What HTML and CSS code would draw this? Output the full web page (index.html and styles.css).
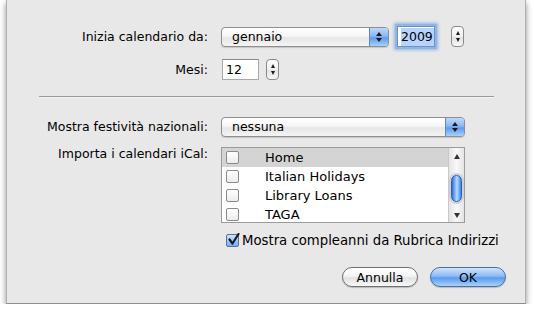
FILE: index.html
```html
<!DOCTYPE html>
<html lang="it">
<head>
    <meta charset="UTF-8">
    <title>Preferenze calendario</title>
    <link rel="stylesheet" href="styles.css">
</head>
<body>
    <div class="sheet">
        <div class="form form-top">
            <label class="lbl">Inizia calendario da:</label>
            <div class="ctrls">
                <div class="popup popup-month">
                    <span class="popup-text">gennaio</span>
                    <span class="popup-arrows"><i class="up"></i><i class="down"></i></span>
                </div>
                <div class="field field-year focus"><span class="sel">2009</span></div>
                <div class="stepper"><i class="up"></i><i class="down"></i></div>
            </div>

            <label class="lbl">Mesi:</label>
            <div class="ctrls">
                <div class="field field-months">12</div>
                <div class="stepper"><i class="up"></i><i class="down"></i></div>
            </div>
        </div>

        <div class="sep"></div>

        <div class="form form-bottom">
            <label class="lbl">Mostra festività nazionali:</label>
            <div class="ctrls">
                <div class="popup popup-wide">
                    <span class="popup-text">nessuna</span>
                    <span class="popup-arrows"><i class="up"></i><i class="down"></i></span>
                </div>
            </div>

            <label class="lbl lbl-top">Importa i calendari iCal:</label>
            <div class="list">
                <div class="rows">
                    <div class="item selected"><span class="cb"></span>Home</div>
                    <div class="item"><span class="cb"></span>Italian Holidays</div>
                    <div class="item"><span class="cb"></span>Library Loans</div>
                    <div class="item"><span class="cb"></span>TAGA</div>
                </div>
                <div class="scroll">
                    <i class="sup"></i>
                    <div class="track"><div class="thumb"></div></div>
                    <i class="sdown"></i>
                </div>
            </div>

            <span></span>
            <div class="check-row"><span class="cb checked"><svg width="13" height="13" viewBox="0 0 13 13"><path d="M2.5 6.5 L5.5 10.5 L11.5 1" fill="none" stroke="#1a1a2a" stroke-width="2.2" stroke-linecap="round" stroke-linejoin="round"/></svg></span>Mostra compleanni da Rubrica Indirizzi</div>
        </div>

        <div class="buttons">
            <button class="btn">Annulla</button>
            <button class="btn btn-default">OK</button>
        </div>
    </div>
</body>
</html>
```

FILE: styles.css
```css
body {
    margin: 0;
    background: #ffffff;
    font-family: "DejaVu Sans", sans-serif;
    font-size: 12.5px;
    color: #000;
}

.sheet {
    margin-left: 6px;
    width: 520px;
    height: 304px;
    background: #e8e8e8;
    border-left: 1px solid #b0b0b0;
    border-right: 1px solid #b0b0b0;
    border-bottom: 1px solid #8c8c8c;
    box-sizing: border-box;
    box-shadow: 0 3px 6px rgba(0, 0, 0, 0.45);
    position: relative;
}

.form {
    display: grid;
    grid-template-columns: 201px 1fr;
    column-gap: 13px;
    align-items: center;
}

.form-top {
    padding-top: 26px;
    row-gap: 12px;
}

.lbl {
    text-align: right;
    white-space: nowrap;
}

.lbl-top {
    align-self: start;
    margin-top: -1px;
}

.ctrls {
    display: flex;
    align-items: center;
    height: 21px;
}

/* pop-up buttons */
.popup {
    height: 18px;
    border: 1px solid #8e8e8e;
    border-radius: 4px;
    background: linear-gradient(#ffffff 0%, #f6f6f6 45%, #e6e6e6 55%, #f4f4f4 100%);
    display: flex;
    align-items: center;
    overflow: hidden;
    box-shadow: 0 1px 1px rgba(0, 0, 0, 0.15);
}

.popup-month {
    width: 166px;
}

.popup-wide {
    width: 242px;
}

.popup-text {
    flex: 1;
    padding-left: 10px;
    line-height: 18px;
}

.popup-arrows {
    width: 18px;
    height: 18px;
    border-left: 1px solid #5d88c4;
    background: linear-gradient(#bcd8fb 0%, #8ab8f3 45%, #5d9bee 55%, #a8d0fb 100%);
    display: flex;
    flex-direction: column;
    align-items: center;
    justify-content: center;
    gap: 2px;
}

.up, .down, .sup, .sdown {
    display: block;
    width: 0;
    height: 0;
    border-left: 3px solid transparent;
    border-right: 3px solid transparent;
}

.up, .sup {
    border-bottom: 4px solid #1b1b1b;
}

.down, .sdown {
    border-top: 4px solid #1b1b1b;
}

/* text fields */
.field {
    height: 19px;
    background: #fff;
    border: 1px solid #a8a8a8;
    border-top-color: #8a8a8a;
    line-height: 19px;
    padding-left: 3px;
    box-sizing: content-box;
}

.field-year {
    width: 33px;
    margin-left: 8px;
}

.focus {
    border-color: #6f92c6;
    box-shadow: 0 0 0 2px #8fb4e8, 0 0 3px 3px rgba(96, 148, 220, 0.6);
}

.sel {
    background: #b6d4fe;
    padding: 1px 1px 2px 0;
}

.field-months {
    width: 32px;
    margin-left: 1px;
}

.stepper {
    width: 11px;
    height: 19px;
    border: 1px solid #8a8a8a;
    border-radius: 4px;
    background: linear-gradient(#ffffff 0%, #f0f0f0 50%, #e0e0e0 51%, #f8f8f8 100%);
    display: flex;
    flex-direction: column;
    align-items: center;
    justify-content: center;
    gap: 3px;
    margin-left: 16px;
}

.field-months + .stepper {
    margin-left: 7px;
}

.stepper .up {
    border-left-width: 2px;
    border-right-width: 2px;
    border-bottom-width: 4px;
}

.stepper .down {
    border-left-width: 2px;
    border-right-width: 2px;
    border-top-width: 4px;
}

.sep {
    height: 1px;
    background: #9a9a9a;
    margin: 16px 31px 0 32px;
    border-bottom: 1px solid #f4f4f4;
}

.form-bottom {
    padding-top: 18px;
    row-gap: 10px;
}

/* calendar list */
.list {
    width: 242px;
    height: 74px;
    border: 1px solid #9b9b9b;
    background: #fff;
    display: flex;
}

.rows {
    flex: 1;
    font-size: 13px;
}

.item {
    height: 19px;
    line-height: 19px;
    display: flex;
    align-items: center;
}

.item.selected {
    background: #d4d4d4;
}

.cb {
    width: 11px;
    height: 11px;
    border: 1px solid #8a8a8a;
    border-radius: 2px;
    background: linear-gradient(#ffffff, #ececec);
    margin-left: 4px;
    margin-right: 26px;
    flex-shrink: 0;
}

.scroll {
    width: 15px;
    border-left: 1px solid #c8c8c8;
    background: linear-gradient(90deg, #e4e4e4, #f8f8f8 50%, #e4e4e4);
    display: flex;
    flex-direction: column;
    align-items: center;
}

.sup {
    margin-top: 6px;
    border-bottom: 5px solid #333;
}

.sdown {
    margin-bottom: 4px;
    border-top: 5px solid #333;
}

.track {
    flex: 1;
    display: flex;
    align-items: center;
    justify-content: center;
}

.thumb {
    width: 11px;
    height: 27px;
    margin-top: 4px;
    border-radius: 6px;
    border: 1px solid #2b5fb0;
    background: linear-gradient(90deg, #3070d8 0%, #8cc0ff 40%, #b8dcff 55%, #3c80e6 100%);
    box-sizing: border-box;
    box-shadow: 0 0 0 2px #d0d0d0;
}

.check-row {
    display: flex;
    align-items: center;
    height: 16px;
    margin-top: -1px;
    white-space: nowrap;
    font-size: 13.25px;
}

.check-row .cb {
    margin-left: 5px;
    margin-right: 3px;
    position: relative;
}

.cb.checked {
    background: linear-gradient(#cfe3fd, #79adf3);
    border-color: #55739e;
}

.cb.checked svg {
    position: absolute;
    left: 0;
    top: -2px;
}

/* buttons */
.buttons {
    display: flex;
    justify-content: flex-end;
    gap: 12px;
    padding-right: 19px;
    margin-top: 19px;
}

.btn {
    font-family: "DejaVu Sans", sans-serif;
    font-size: 12.5px;
    height: 20px;
    width: 76px;
    padding: 0;
    border: 1px solid #6f6f6f;
    border-radius: 10px;
    background: linear-gradient(#ffffff 0%, #f4f4f4 45%, #e2e2e2 55%, #f7f7f7 100%);
    color: #000;
    box-shadow: 0 1px 1px rgba(0, 0, 0, 0.2);
}

.btn-default {
    border-color: #4c6f9f;
    background: linear-gradient(#cfe4fd 0%, #8dbaf4 45%, #5b9bee 55%, #a6d2fc 100%);
}
```
